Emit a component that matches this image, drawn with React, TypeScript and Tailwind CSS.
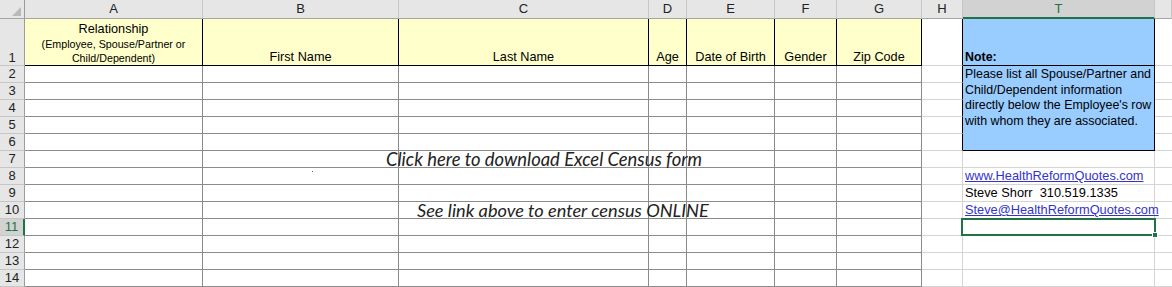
import React from "react";

const gridCols =
  "grid grid-cols-[25px_178px_196px_250px_38px_88px_62px_85px_41px_192px_1fr] grid-rows-[19px_47px_repeat(13,17px)]";

const letters = ["A", "B", "C", "D", "E", "F", "G", "H", "T", ""];
const titles = ["First Name", "Last Name", "Age", "Date of Birth", "Gender", "Zip Code"];
const rows = Array.from({ length: 13 }, (_, i) => i + 2);

function ColHead({ label }: { label: string }) {
  const active = label === "T";
  return (
    <div
      className={
        active
          ? "flex items-center justify-center bg-[#d2d2d2] border-r border-r-[#c6c6c6] border-b-2 border-b-[#217346] text-[13px] text-[#217346]"
          : "flex items-center justify-center bg-[#e6e6e6] border-r border-r-[#c6c6c6] border-b border-b-[#a6a6a6] text-[13px] text-[#222]"
      }
    >
      {label}
    </div>
  );
}

function RowHead({ n }: { n: number }) {
  const active = n === 11;
  return (
    <div
      className={
        active
          ? "flex items-center justify-center bg-[#d2d2d2] border-r-2 border-r-[#217346] border-b border-b-[#c6c6c6] text-[13px] text-[#217346]"
          : "flex items-center justify-center bg-[#e6e6e6] border-r border-r-[#9c9c9c] border-b border-b-[#c6c6c6] text-[13px] text-[#222]"
      }
    >
      {n}
    </div>
  );
}

function TableCell({ row, col }: { row: number; col: number }) {
  return (
    <div className="relative border-r border-b border-[#8c8c8c] bg-white">
      {row === 8 && col === 1 && (
        <span className="absolute left-[109px] top-[3px] h-[1px] w-[1px] bg-[#555]" />
      )}
      {row === 7 && col === 2 && (
        <span className="absolute left-[-13px] top-[-2px] z-10 whitespace-nowrap font-['Lato',sans-serif] text-[18.4px] italic leading-[20px] text-[#222]">
          Click here to download Excel Census form
        </span>
      )}
      {row === 10 && col === 2 && (
        <span className="absolute left-[18px] top-[-2px] z-10 whitespace-nowrap font-['Lato',sans-serif] text-[18.2px] italic leading-[20px] text-[#222]">
          See link above to enter census ONLINE
        </span>
      )}
    </div>
  );
}

function ContactCell({ row }: { row: number }) {
  return (
    <div className="relative flex items-center whitespace-nowrap border-r border-b border-[#d4d4d4] px-[2px] text-[12.8px] leading-[16px]">
      {row === 8 && <span className="text-[#3333cc] underline">www.HealthReformQuotes.com</span>}
      {row === 9 && <span>Steve Shorr&nbsp; 310.519.1335</span>}
      {row === 10 && <span className="text-[#3333cc] underline">Steve@HealthReformQuotes.com</span>}
      {row === 11 && (
        <div className="absolute -left-[2px] -top-[1px] -right-[2px] -bottom-[1px] z-20 border-2 border-[#217346]">
          <span className="absolute -right-[4px] -bottom-[4px] h-[6px] w-[6px] border border-white bg-[#217346]" />
        </div>
      )}
    </div>
  );
}

export default function App() {
  return (
    <div className="h-[287px] w-[1172px] overflow-hidden bg-white font-['Liberation_Sans',Arial,sans-serif] text-black">
      <div className={gridCols}>
        {/* column letters */}
        <div className="relative bg-[#e6e6e6] border-r border-r-[#9c9c9c] border-b border-b-[#a6a6a6]">
          <svg className="absolute left-0 top-0" width="24" height="18" viewBox="0 0 24 18">
            <polygon points="21,7 21,16 12,16" fill="#b9b9b9" />
          </svg>
        </div>
        {letters.map((l, i) => (
          <ColHead key={i} label={l} />
        ))}

        {/* row 1: titles */}
        <div className="flex items-end justify-center bg-[#e6e6e6] border-r border-r-[#9c9c9c] border-b border-b-[#c6c6c6] text-[13px] leading-[15px] text-[#222]">
          1
        </div>
        <div className="flex flex-col items-center justify-end border-r border-b border-black bg-[#ffffcc] text-center">
          <span className="text-[12.7px] leading-[16px]">Relationship</span>
          <span className="text-[10.7px] leading-[14px]">(Employee, Spouse/Partner or</span>
          <span className="text-[10.7px] leading-[14px]">Child/Dependent)</span>
        </div>
        {titles.map((t) => (
          <div
            key={t}
            className="flex items-end justify-center border-r border-b border-black bg-[#ffffcc] text-[12.7px] leading-[16px] whitespace-nowrap"
          >
            {t}
          </div>
        ))}
        <div className="border-r border-r-black border-b border-b-[#d4d4d4]" />
        <div className="flex items-end border-r border-b border-black bg-[#99ccff] px-[2px] text-[12.4px] font-bold leading-[16px]">
          Note:
        </div>
        <div className="border-b border-[#d4d4d4]" />

        {/* rows 2 - 14 */}
        {rows.map((r) => (
          <React.Fragment key={r}>
            <RowHead n={r} />
            {[0, 1, 2, 3, 4, 5, 6].map((c) => (
              <TableCell key={c} row={r} col={c} />
            ))}
            <div
              className={
                r <= 6
                  ? "border-r border-r-black border-b border-b-[#d4d4d4]"
                  : "border-r border-b border-[#d4d4d4]"
              }
            />
            {r === 2 && (
              <div className="row-span-5 border-r border-b border-black bg-[#99ccff] px-[2px] pt-[1px] text-[12.4px] leading-[15.5px]">
                Please list all Spouse/Partner and
                <br />
                Child/Dependent information
                <br />
                directly below the Employee's row
                <br />
                with whom they are associated.
              </div>
            )}
            {r >= 7 && <ContactCell row={r} />}
            <div className="border-b border-[#d4d4d4]" />
          </React.Fragment>
        ))}
      </div>
    </div>
  );
}
